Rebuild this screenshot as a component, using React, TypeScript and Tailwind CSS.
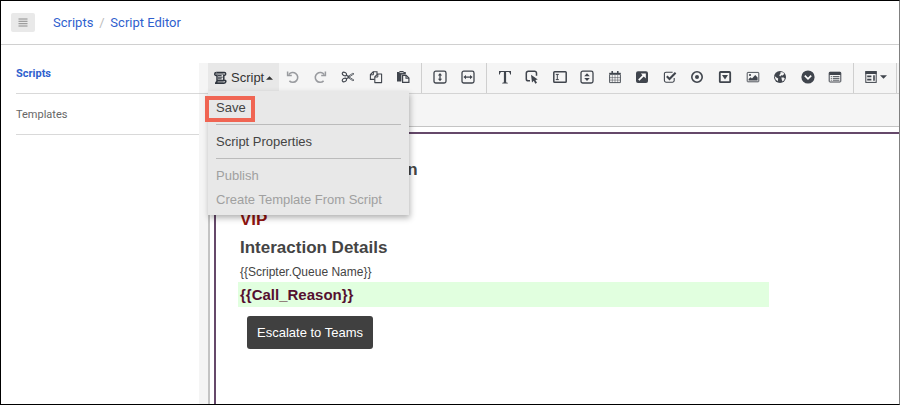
import type { ReactNode } from "react";

function Icon({ children, className = "" }: { children: ReactNode; className?: string }) {
  return (
    <svg
      viewBox="0 0 14 14"
      className={`h-3.5 w-3.5 shrink-0 ${className}`}
      fill="none"
      stroke="currentColor"
      strokeWidth="1.3"
      aria-hidden="true"
    >
      {children}
    </svg>
  );
}

type Tool = { label: string; muted?: boolean; drawing: ReactNode };

const editTools: Tool[] = [
  {
    label: "Undo",
    muted: true,
    drawing: (
      <>
        <path d="M2.8 4.6A4.9 4.9 0 1 1 3.4 10.9" strokeWidth="1.6" />
        <path d="M1.6 1.4V5.6H5.8" strokeWidth="1.5" />
      </>
    ),
  },
  {
    label: "Redo",
    muted: true,
    drawing: (
      <>
        <path d="M11.2 4.6A4.9 4.9 0 1 0 10.6 10.9" strokeWidth="1.6" />
        <path d="M12.4 1.4V5.6H8.2" strokeWidth="1.5" />
      </>
    ),
  },
  {
    label: "Cut",
    drawing: (
      <>
        <ellipse cx="3.4" cy="4" rx="2.2" ry="1.6" transform="rotate(25 3.4 4)" strokeWidth="1.1" />
        <ellipse cx="3.4" cy="10" rx="2.2" ry="1.6" transform="rotate(-25 3.4 10)" strokeWidth="1.1" />
        <path d="M5.2 5L8 7L5.2 9" strokeWidth="1.2" />
        <path d="M7 6.4L11.6 3.4L13 3.8L8.2 7L13 10.2L11.6 10.6L7 7.6" strokeWidth="0.8" />
      </>
    ),
  },
  {
    label: "Copy",
    drawing: (
      <>
        <path d="M5.6 9.4H1.4V4.6L4.2 1.8H8V4" strokeWidth="1.1" />
        <path d="M4.4 1.8V4.8H1.4" strokeWidth="1" />
        <path d="M8.6 4H12.6V12.6H5.8V6.8Z" strokeWidth="1.1" strokeLinejoin="round" />
        <path d="M8.8 4V7H5.8" strokeWidth="1" />
      </>
    ),
  },
  {
    label: "Paste",
    drawing: (
      <>
        <path d="M1 2H3.4V1H7.6V2H9.8V4.4H5.4V11.4H1Z" fill="currentColor" stroke="none" />
        <path d="M3.6 2.6H7.4" stroke="#f5f5f5" strokeWidth="0.8" />
        <path d="M6.6 5.4H10.2L12.9 8.1V12.4H6.6Z" fill="#f5f5f5" strokeWidth="1.2" />
        <path d="M10 5.4V8.3H12.9" strokeWidth="1.1" />
      </>
    ),
  },
];

const stackTools: Tool[] = [
  {
    label: "Vertical Stack Container",
    drawing: (
      <>
        <rect x="1" y="1.2" width="12" height="11.8" rx="1.8" />
        <path d="M7 4.4V9.8" />
        <path d="M4.9 5.4L7 3L9.1 5.4ZM4.9 8.8L7 11.2L9.1 8.8Z" fill="currentColor" stroke="none" />
      </>
    ),
  },
  {
    label: "Horizontal Stack Container",
    drawing: (
      <>
        <rect x="1" y="1.2" width="12" height="11.8" rx="1.8" />
        <path d="M4 7.1H10" />
        <path d="M5 5L2.4 7.1L5 9.2ZM9 5L11.6 7.1L9 9.2Z" fill="currentColor" stroke="none" />
      </>
    ),
  },
];

const componentTools: Tool[] = [
  {
    label: "Text",
    drawing: (
      <path
        d="M1 1H13V4.4H12.1C11.9 2.6 11.4 2.1 9.8 2.1H8.1V11.4C8.1 12.4 8.5 12.6 9.8 12.7V13.4H4.2V12.7C5.5 12.6 5.9 12.4 5.9 11.4V2.1H4.2C2.6 2.1 2.1 2.6 1.9 4.4H1Z"
        fill="currentColor"
        stroke="none"
      />
    ),
  },
  {
    label: "Button",
    drawing: (
      <>
        <path d="M5 10.8H3.2A1.9 1.9 0 0 1 1.3 8.9V3.2A1.9 1.9 0 0 1 3.2 1.3H9.6A1.9 1.9 0 0 1 11.5 3.2V5.8" strokeWidth="1.5" />
        <path d="M6 4.8L12.8 9.4L10.4 9.9L12 12.8L10.3 13.7L8.8 10.8L7 12.6Z" fill="currentColor" stroke="none" />
      </>
    ),
  },
  {
    label: "Text Input",
    drawing: (
      <>
        <rect x="0.8" y="1.8" width="12.4" height="10.4" rx="0.8" strokeWidth="1.5" />
        <path d="M2.8 4.4H5.8M4.3 4.4V9.6M2.8 9.6H5.8" strokeWidth="1" />
      </>
    ),
  },
  {
    label: "Number Stepper",
    drawing: (
      <>
        <rect x="1" y="1.2" width="12" height="11.8" rx="1.8" />
        <path d="M4.2 6.3L7 3.2L9.8 6.3ZM4.2 7.9L7 11L9.8 7.9Z" fill="currentColor" stroke="none" />
      </>
    ),
  },
  {
    label: "Date Picker",
    drawing: (
      <>
        <path d="M1.6 5V12.6H12.4V5" strokeWidth="0.9" />
        <path d="M1.2 2.8H12.8V4.8H1.2Z" fill="currentColor" stroke="none" />
        <path d="M4.3 5V12.6M7 5V12.6M9.7 5V12.6M1.6 7.6H12.4M1.6 10.1H12.4" strokeWidth="0.5" />
        <path d="M4.2 1V3.8M9.8 1V3.8" strokeWidth="1.5" />
      </>
    ),
  },
  {
    label: "Hyperlink",
    drawing: (
      <>
        <rect x="1" y="1.2" width="12" height="11.8" rx="2" fill="currentColor" stroke="none" />
        <path d="M3.8 10.2L8.6 5.4" stroke="#fff" strokeWidth="1.8" />
        <path d="M5.8 3.4H10.8V8.4Z" fill="#fff" stroke="none" />
      </>
    ),
  },
  {
    label: "Checkbox",
    drawing: (
      <>
        <path d="M11.2 8V10.6A1.6 1.6 0 0 1 9.6 12.2H3A1.6 1.6 0 0 1 1.4 10.6V3.8A1.6 1.6 0 0 1 3 2.2H9.6" strokeWidth="1.1" />
        <path d="M3.8 6.2L6.5 8.9L12.6 2.8" strokeWidth="2.1" />
      </>
    ),
  },
  {
    label: "Radio Button",
    drawing: (
      <>
        <circle cx="7" cy="7" r="5.2" strokeWidth="1.6" />
        <circle cx="7" cy="7" r="2" fill="currentColor" stroke="none" />
      </>
    ),
  },
  {
    label: "Dropdown",
    drawing: (
      <>
        <rect x="1.8" y="2" width="10.4" height="10.2" rx="0.8" strokeWidth="1.8" />
        <path d="M4 5H10L7 9.4Z" fill="currentColor" stroke="none" />
      </>
    ),
  },
  {
    label: "Image",
    drawing: (
      <>
        <rect x="1.2" y="2.4" width="11.6" height="9.4" rx="0.6" strokeWidth="0.9" />
        <circle cx="4" cy="5" r="1.1" fill="currentColor" stroke="none" />
        <path d="M2.6 10.6V9L4.6 7.2L6 8.4L9.2 5L11.6 7.6V10.6Z" fill="currentColor" stroke="none" />
      </>
    ),
  },
  {
    label: "Web Page",
    drawing: (
      <>
        <circle cx="7" cy="7" r="6" fill="currentColor" stroke="none" />
        <path d="M7.6 2L10.4 2.4L11.2 4L9.6 5.4L8.2 5.2L7.2 6.4L6.2 5.2L7.4 3.8Z" fill="#f5f5f5" stroke="none" />
        <path d="M8.4 7.6L10.6 7.4L11.8 8.4L10.8 10.4L9.4 11.6L8.8 9.8Z" fill="#f5f5f5" stroke="none" />
        <path d="M1.6 6L3.4 7.4L5.2 8.6L4.8 11.2L2.6 9.6Z" fill="#f5f5f5" stroke="none" />
      </>
    ),
  },
  {
    label: "Slider",
    drawing: (
      <>
        <circle cx="7" cy="7" r="6.6" fill="currentColor" stroke="none" />
        <path d="M3.8 5.6L7 8.8L10.2 5.6" stroke="#fff" strokeWidth="1.7" />
      </>
    ),
  },
  {
    label: "Form",
    drawing: (
      <>
        <rect x="1.2" y="2.2" width="11.6" height="9.8" rx="0.8" strokeWidth="1" />
        <path d="M1.2 2H12.8V5H1.2Z" fill="currentColor" stroke="none" />
        <path d="M2.8 6.6H3.8M2.8 8.4H3.8M2.8 10.2H3.8M4.8 6.6H11.4M4.8 8.4H11.4M4.8 10.2H11.4" strokeWidth="0.9" />
      </>
    ),
  },
];

function ToolGroup({ tools, className }: { tools: Tool[]; className: string }) {
  return (
    <div role="group" className={`flex shrink-0 border-r border-[#cfcfcf] pr-1 ${className}`}>
      {tools.map((tool) => (
        <button
          key={tool.label}
          type="button"
          aria-label={tool.label}
          className={`flex flex-1 items-center justify-center pb-0.5 ${tool.muted ? "text-[#999b9f]" : "text-[#40454d]"}`}
        >
          <Icon>{tool.drawing}</Icon>
        </button>
      ))}
    </div>
  );
}

function ScriptMenu() {
  const item = "block h-6 w-full px-2 text-left";
  return (
    <div
      role="menu"
      className="absolute top-7 left-0 z-10 w-[201px] bg-[#e8e8e8] pt-[5px] pb-[3px] text-[13px] text-[#444] shadow-[1px_3px_6px_rgba(0,0,0,0.3)]"
    >
      <div className="relative">
        <button type="button" role="menuitem" className={item}>
          Save
        </button>
        <span className="pointer-events-none absolute top-0 -left-[3px] h-[26px] w-[50px] border-4 border-[#f06553]" />
      </div>
      <hr className="mx-2 mt-1 mb-[5px] border-[#bbb]" />
      <button type="button" role="menuitem" className={item}>
        Script Properties
      </button>
      <hr className="mx-2 mt-1 mb-[5px] border-[#bbb]" />
      <button type="button" role="menuitem" disabled className={`${item} text-[#a0a0a0]`}>
        Publish
      </button>
      <button type="button" role="menuitem" disabled className={`${item} text-[#a0a0a0]`}>
        Create Template From Script
      </button>
    </div>
  );
}

function Toolbar() {
  return (
    <div className="flex h-[31px] border-b border-[#d4d4d4] pl-[9px] font-['Liberation_Sans',Arial,sans-serif]">
      <div className="relative w-[71px] shrink-0">
        <button
          type="button"
          aria-expanded="true"
          className="flex h-7 w-full items-center bg-[#e8e8e8] pt-0.5 pl-[5px] text-[13px] text-[#333]"
        >
          <Icon className="text-[#30363f]">
            <path d="M3.4 1.6H11.4C13 1.6 13.2 4 11.6 4.2H10.8V9.8" strokeWidth="1.5" />
            <path d="M3.4 1.6C1.2 1.6 1.2 4.4 3.2 4.4H4V9.8C4 11.2 3 12.2 2 12.2H10.8C13 12.2 13 9.8 12.6 9.6H4.6" strokeWidth="1.5" />
            <path d="M5 4.6H8.6M5 6.2H9.6M5 7.8H8.6" strokeWidth="1" />
            <path d="M2.8 3H10.6M2.6 11H10.6" strokeWidth="0.9" />
          </Icon>
          <span className="ml-1">Script</span>
          <svg viewBox="0 0 8 4" className="ml-0.5 h-1 w-[7px]" fill="currentColor" aria-hidden="true">
            <path d="M0 4L4 0L8 4Z" />
          </svg>
        </button>
        <ScriptMenu />
      </div>
      <ToolGroup tools={editTools} className="w-[143px]" />
      <ToolGroup tools={stackTools} className="w-[65px] pl-1" />
      <ToolGroup tools={componentTools} className="w-[367px] pl-1" />
      <button
        type="button"
        aria-label="Layout"
        className="flex w-[43px] shrink-0 items-center justify-center gap-0.5 border-r border-[#cfcfcf] pb-0.5 text-[#40454d]"
      >
        <Icon>
          <rect x="1.8" y="1.6" width="10.4" height="10.8" strokeWidth="1" />
          <path d="M1.4 1.2H12.6V4H1.4Z" fill="currentColor" stroke="none" />
          <path d="M3.2 6.4H7.4M3.2 9.6H7.4" strokeWidth="1.6" />
          <path d="M10 5.2V10.8" strokeWidth="1.6" />
        </Icon>
        <svg viewBox="0 0 8 4" className="h-1 w-[7px]" fill="currentColor" aria-hidden="true">
          <path d="M0 0L4 4L8 0Z" />
        </svg>
      </button>
    </div>
  );
}

function Canvas() {
  return (
    <div className="ml-[9px] flex flex-1 border-t border-l-2 border-[#c4c4c4] bg-white pt-[5px] pl-1">
      <div className="flex-1 border-t-2 border-l-2 border-[#65486a] pt-6 pl-[22px] font-['Liberation_Sans',Arial,sans-serif] text-[#444]">
        <h2 className="pl-0.5 text-[17px] leading-6 font-bold">Customer Information</h2>
        <p className="mt-[26px] pl-0.5 text-[17px] leading-6 font-bold text-[#8f1410]">VIP</p>
        <h2 className="mt-1 pl-0.5 text-[17px] leading-6 font-bold">Interaction Details</h2>
        <p className="mt-1 pl-0.5 text-[12px] leading-4">{"{{Scripter.Queue Name}}"}</p>
        <p className="mt-0.5 w-[531px] max-w-full bg-[#e1ffdf] pl-0.5 text-[15px] leading-[25px] font-bold text-[#55102f]">
          {"{{Call_Reason}}"}
        </p>
        <button
          type="button"
          className="mt-[9px] ml-[9px] h-[33px] rounded-[3px] bg-[#404040] px-2.5 text-[13px] text-white"
        >
          Escalate to Teams
        </button>
      </div>
    </div>
  );
}

export default function App() {
  return (
    <div className="flex min-h-screen flex-col border border-black border-r-[#808080] bg-white font-[Roboto,sans-serif]">
      <header className="flex h-11 items-center border-b border-[#d0d0d0] pl-2.5">
        <button
          type="button"
          aria-label="Toggle navigation"
          className="flex h-[19px] w-6 items-center justify-center rounded-[2px] bg-[#e9e9e9] text-[#8c8c8c]"
        >
          <svg viewBox="0 0 10 9" className="h-[9px] w-2.5" stroke="currentColor" aria-hidden="true">
            <path d="M0.5 1H9.5M0.5 3.3H9.5M0.5 5.7H9.5M0.5 8H9.5" />
          </svg>
        </button>
        <nav aria-label="Breadcrumb" className="ml-[18px] flex text-[13px] text-[#2f5fce]">
          <a href="#scripts">Scripts</a>
          <span className="w-[17px] text-center text-[#bbb]">/</span>
          <a href="#editor">Script Editor</a>
        </nav>
      </header>
      <div className="flex flex-1 pt-[18px]">
        <nav aria-label="Sections" className="w-[198px] shrink-0 pl-[15px] text-[11px]">
          <a href="#scripts" className="flex h-[31px] items-center border-b border-[#d9d9d9] pb-2 font-bold text-[#2f5fce]">
            Scripts
          </a>
          <a href="#templates" className="flex h-[41px] items-center border-b border-[#d9d9d9] pt-0.5 text-[#666]">
            Templates
          </a>
        </nav>
        <main className="flex min-w-0 flex-1 flex-col bg-[#f5f5f5]">
          <Toolbar />
          <div className="h-8" />
          <Canvas />
        </main>
      </div>
    </div>
  );
}
